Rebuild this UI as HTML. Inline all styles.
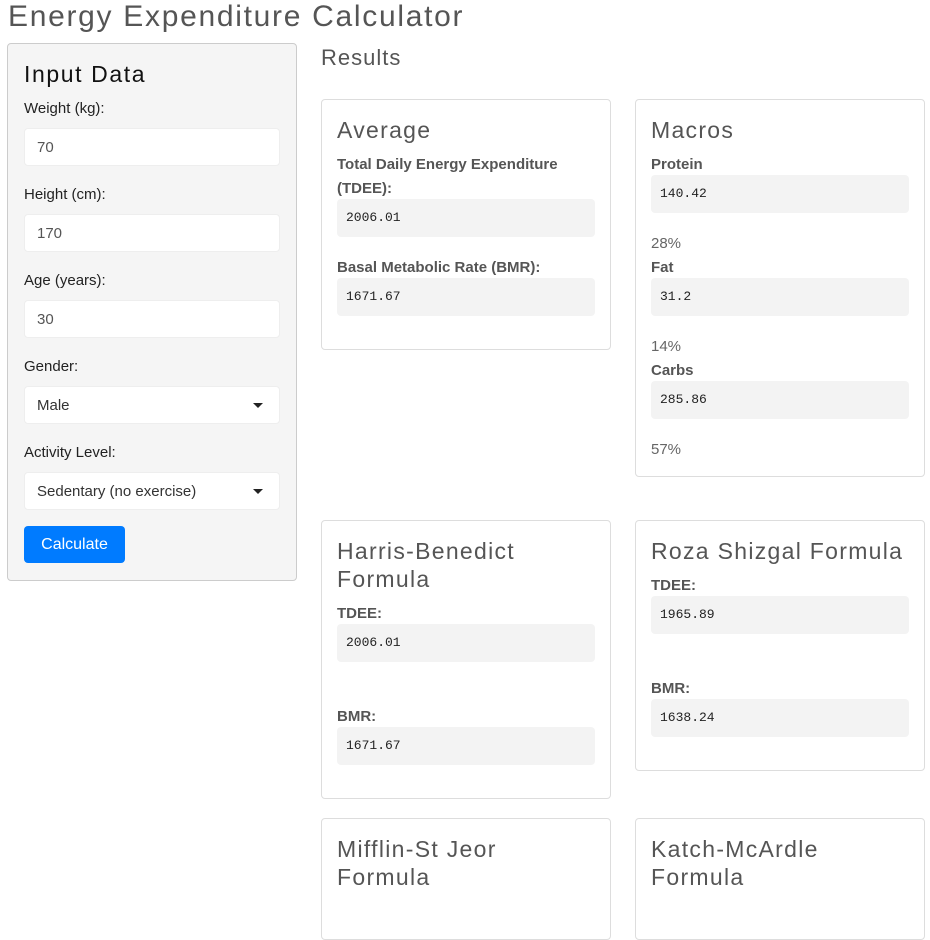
<!DOCTYPE html>
<html><head><meta charset="utf-8"><style>
body{margin:0;width:930px;height:896px;overflow:hidden;background:#fff;font-family:"Liberation Sans",sans-serif;color:#222;position:relative}
.a{position:absolute;white-space:nowrap}
h1{position:absolute;left:8px;top:0;margin:0;font-weight:normal;font-size:30px;letter-spacing:1.7px;line-height:34px;color:#555}
.panel{position:absolute;left:7px;top:43px;width:288px;height:536px;background:#f5f5f5;border:1px solid #ccc;border-radius:4px}
.lbl{font-size:15px;color:#222}
.inp{position:absolute;left:24px;width:254px;height:36px;background:#fff;border:1px solid #eee;border-radius:4px;font-size:15px;color:#555;line-height:38px;text-indent:12px}
.caret{position:absolute;right:16px;top:16px;width:0;height:0;border-left:5px solid transparent;border-right:5px solid transparent;border-top:5px solid #222}
.btn{position:absolute;left:24px;top:526px;width:101px;height:37px;background:#007bff;border-radius:4px;color:#fff;font-size:16px;line-height:37px;text-align:center}
.card{position:absolute;width:288px;border:1px solid #ddd;border-radius:4px;background:#fff}
.t{font-size:23px;color:#555;line-height:28px;letter-spacing:1.3px}
.b{font-size:15px;font-weight:bold;color:#555}
.pre{position:absolute;width:258px;height:38px;background:#f3f3f3;border-radius:4px;font-family:"Liberation Mono",monospace;font-size:13px;line-height:38px;text-indent:9px;color:#222}
.pct{font-size:15px;color:#666}
</style></head><body>
<h1>Energy Expenditure Calculator</h1>
<div class="panel"></div>
<div class="a" style="left:24px;top:61px;font-size:23px;letter-spacing:1.6px;color:#111">Input Data</div>
<div class="a lbl" style="left:24px;top:100px">Weight (kg):</div>
<div class="inp" style="top:128px">70</div>
<div class="a lbl" style="left:24px;top:186px">Height (cm):</div>
<div class="inp" style="top:214px">170</div>
<div class="a lbl" style="left:24px;top:272px">Age (years):</div>
<div class="inp" style="top:300px">30</div>
<div class="a lbl" style="left:24px;top:358px">Gender:</div>
<div class="inp" style="top:386px;color:#333">Male<div class="caret"></div></div>
<div class="a lbl" style="left:24px;top:444px">Activity Level:</div>
<div class="inp" style="top:472px;color:#333">Sedentary (no exercise)<div class="caret"></div></div>
<div class="btn">Calculate</div>

<div class="a" style="left:321px;top:45px;font-size:22px;letter-spacing:1px;color:#555">Results</div>

<div class="card" style="left:321px;top:99px;height:249px"></div>
<div class="a t" style="left:337px;top:116px">Average</div>
<div class="a b" style="left:337px;top:156px">Total Daily Energy Expenditure</div>
<div class="a b" style="left:337px;top:180px">(TDEE):</div>
<div class="pre" style="left:337px;top:199px">2006.01</div>
<div class="a b" style="left:337px;top:259px">Basal Metabolic Rate (BMR):</div>
<div class="pre" style="left:337px;top:278px">1671.67</div>

<div class="card" style="left:635px;top:99px;height:376px"></div>
<div class="a t" style="left:651px;top:116px">Macros</div>
<div class="a b" style="left:651px;top:156px">Protein</div>
<div class="pre" style="left:651px;top:175px">140.42</div>
<div class="a pct" style="left:651px;top:235px">28%</div>
<div class="a b" style="left:651px;top:259px">Fat</div>
<div class="pre" style="left:651px;top:278px">31.2</div>
<div class="a pct" style="left:651px;top:338px">14%</div>
<div class="a b" style="left:651px;top:362px">Carbs</div>
<div class="pre" style="left:651px;top:381px">285.86</div>
<div class="a pct" style="left:651px;top:441px">57%</div>

<div class="card" style="left:321px;top:520px;height:277px"></div>
<div class="a t" style="left:337px;top:537px">Harris-Benedict<br>Formula</div>
<div class="a b" style="left:337px;top:605px">TDEE:</div>
<div class="pre" style="left:337px;top:624px">2006.01</div>
<div class="a b" style="left:337px;top:708px">BMR:</div>
<div class="pre" style="left:337px;top:727px">1671.67</div>

<div class="card" style="left:635px;top:520px;height:249px"></div>
<div class="a t" style="left:651px;top:537px">Roza Shizgal Formula</div>
<div class="a b" style="left:651px;top:577px">TDEE:</div>
<div class="pre" style="left:651px;top:596px">1965.89</div>
<div class="a b" style="left:651px;top:680px">BMR:</div>
<div class="pre" style="left:651px;top:699px">1638.24</div>

<div class="card" style="left:321px;top:818px;height:120px"></div>
<div class="a t" style="left:337px;top:835px">Mifflin-St Jeor<br>Formula</div>
<div class="card" style="left:635px;top:818px;height:120px"></div>
<div class="a t" style="left:651px;top:835px">Katch-McArdle<br>Formula</div>
</body></html>
